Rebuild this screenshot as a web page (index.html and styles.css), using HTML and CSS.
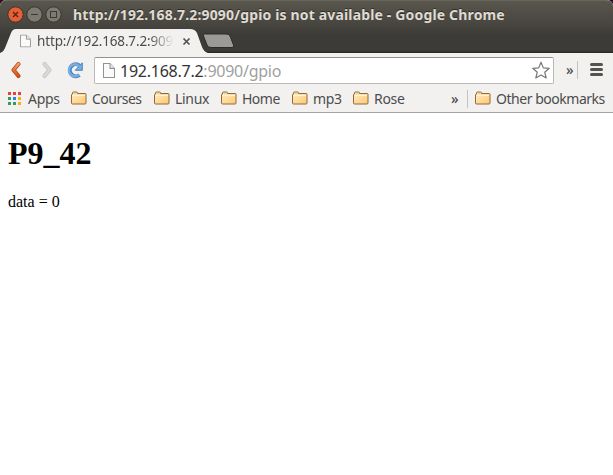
FILE: index.html
```
<!DOCTYPE html>
<html lang="en">
<head>
<meta charset="utf-8">
<title>http://192.168.7.2:9090/gpio is not available</title>
<link rel="stylesheet" href="styles.css">
</head>
<body>
<svg class="defs" width="0" height="0" aria-hidden="true">
  <defs>
    <linearGradient id="paper" x1="0" y1="0" x2="1" y2="1"><stop offset="0" stop-color="#ffeec4"/><stop offset="1" stop-color="#fcc874"/></linearGradient>
    <linearGradient id="orange" x1="0" y1="0" x2="0" y2="1"><stop offset="0" stop-color="#f0a06a"/><stop offset="1" stop-color="#dc4a10"/></linearGradient>
    <symbol id="folder" viewBox="0 0 16 14">
      <path d="M1.5 3V1.9Q1.5 1 2.4 1H5.6Q6.5 1 6.5 1.9V2.5H14.2Q15 2.5 15 3.3V12Q15 13 14 13H1.5Q.5 13 .5 12V4Q.5 3 1.5 3Z" fill="url(#paper)" stroke="#94683a"/>
      <path d="M1.5 4.5H14" stroke="#fff3d5" fill="none"/><path d="M2.5 2.5H5.5" stroke="#efcf95"/>
    </symbol>
    <symbol id="page" viewBox="0 0 12 14">
      <path d="M.5.5H7L11.5 5V13.5H.5Z" fill="#fafafa" stroke="#929292"/><path d="M7 .5V5H11.5" fill="#e8e8e8" stroke="#929292"/>
    </symbol>
  </defs>
</svg>
<div class="window">
  <header class="titlebar">
    <svg class="controls" width="56" height="19" viewBox="0 0 56 19">
      <circle cx="8.500" cy="9.500" r="7.700" fill="#e95f35" stroke="#36342f"/>
      <path d="M6 7L11 12M11 7L6 12" stroke="#522517" stroke-width="1.400"/>
      <circle cx="27.500" cy="9.500" r="7.700" fill="#7c7a71" stroke="#36342f"/>
      <path d="M24 9.500H31" stroke="#3a3934"/>
      <circle cx="46.500" cy="9.500" r="7.700" fill="#7c7a71" stroke="#36342f"/>
      <rect x="43.500" y="6.500" width="6" height="6" fill="none" stroke="#3a3934"/>
    </svg>
    <h2 class="title">http://192.168.7.2:9090/gpio is not available - Google Chrome</h2>
  </header>
  <div class="tabstrip">
    <svg class="tab-shapes" width="240" height="25" viewBox="0 0 240 25">
      <path d="M0 25C3 24 4 22 5 20L11 5Q12.500 1 16 1H190Q195 1 197 5L202 19Q204 24 208 25Z" fill="#f2f1f0"/>
      <path d="M204 6H226Q229 6 230 8L233.500 17Q234.500 19.500 232 19.500H211Q208 19.500 207 17L203.500 8Q203 6 204 6Z" fill="#9b9a98" stroke="#2d2c28"/>
    </svg>
    <div class="tab">
      <svg width="11" height="14" viewBox="0 0 12 14"><use href="#page"/></svg>
      <span class="tab-title">http://192.168.7.2:9090/gpio</span>
      <svg width="9" height="9" viewBox="0 0 9 9"><path d="M1.500 1.500L7.500 7.500M7.500 1.500L1.500 7.500" stroke="#55524e" stroke-width="1.700"/></svg>
    </div>
  </div>
  <nav class="toolbar">
    <svg class="nav" width="80" height="23" viewBox="0 0 80 23">
      <g fill="none" stroke-linecap="round" stroke-linejoin="round">
        <path d="M14.500 6L9.500 12L14.500 18" stroke="#b24d1d" stroke-width="4.200"/>
        <path d="M14.500 6L9.500 12L14.500 18" stroke="url(#orange)" stroke-width="2.600"/>
        <path d="M40.500 6L45.500 12L40.500 18" stroke="#c5c4c3" stroke-width="4.200"/>
        <path d="M40.500 6L45.500 12L40.500 18" stroke="#dad9d8" stroke-width="2.600"/>
      </g>
      <path d="M75.500 7.500A6 6 0 1 0 75.500 17" fill="none" stroke="#4e84bd" stroke-width="4"/>
      <path d="M78.300 4.800V12.300H71.300Z" fill="#78aede" stroke="#4e84bd" stroke-linejoin="round"/>
      <path d="M75.300 8.200A6 6 0 1 0 75.100 16.600" fill="none" stroke="#78aede" stroke-width="2.400"/>
    </svg>
    <div class="omnibox">
      <svg width="12" height="15" viewBox="0 0 12 14" preserveAspectRatio="none"><use href="#page"/></svg>
      <span class="url">192.168.7.2<span class="path">:9090/gpio</span></span>
      <svg class="star" width="20" height="19" viewBox="0 0 20 19"><path d="M10 1.200L12.300 6.900L18.300 7.300L13.700 11.200L15.200 17L10 13.900L4.800 17L6.300 11.200L1.700 7.300L7.700 6.900Z" fill="#fff" stroke="#777" stroke-width="1.200" stroke-linejoin="round"/></svg>
    </div>
    <span class="more">»</span>
    <i class="rule"></i>
    <svg class="menu" width="13" height="13" viewBox="0 0 13 13"><path d="M1.500 1.500H11.500M1.500 6.500H11.500M1.500 11.500H11.500" stroke="#55534f" stroke-width="3" stroke-linecap="round"/></svg>
  </nav>
  <nav class="bookmarks">
    <a class="mark apps"><svg width="13" height="13" viewBox="0 0 13 13"><path d="M0 0h3v3H0zM5 0h3v3H5zM10 0h3v3h-3z" fill="#e8403a"/><path d="M0 5h3v3H0zM0 10h3v3H0zM5 10h3v3H5z" fill="#329b5b"/><path d="M5 5h3v3H5z" fill="#2684ee"/><path d="M10 5h3v3h-3zM10 10h3v3h-3z" fill="#f6b40a"/></svg><span>Apps</span></a>
    <a class="mark courses"><svg width="16" height="14"><use href="#folder"/></svg><span>Courses</span></a>
    <a class="mark linux"><svg width="16" height="14"><use href="#folder"/></svg><span>Linux</span></a>
    <a class="mark home"><svg width="16" height="14"><use href="#folder"/></svg><span>Home</span></a>
    <a class="mark mp3"><svg width="16" height="14"><use href="#folder"/></svg><span>mp3</span></a>
    <a class="mark rose"><svg width="16" height="14"><use href="#folder"/></svg><span>Rose</span></a>
    <span class="more">»</span>
    <i class="rule"></i>
    <a class="mark other"><svg width="16" height="14"><use href="#folder"/></svg><span>Other bookmarks</span></a>
  </nav>
  <main class="page">
    <h1>P9_42</h1>
    <p>data = 0</p>
  </main>
</div>
</body>
</html>
```
FILE: styles.css
```
* { box-sizing: border-box; }
body { margin: 0; background: #2f0c24; font-family: "Noto Sans", sans-serif; }
.defs { position: absolute; }
svg { display: block; flex: none; }
.window { width: 613px; height: 475px; display: flex; flex-direction: column; overflow: hidden; border-radius: 6px 6px 0 0; background: #fff; white-space: nowrap; }
.titlebar { height: 28px; flex: none; display: flex; align-items: center; padding: 0 0 0 7px; border-top: 1px solid #69665c; background: linear-gradient(#59564d, #45433d); }
.title { margin: 1px 0 0 10px; font-size: 14px; line-height: 20px; font-weight: 700; color: #dfdbd2; letter-spacing: .16px; text-shadow: 0 -1px #2c2b27; }
.tabstrip { height: 25px; flex: none; position: relative; background: linear-gradient(#42413b, #3c3b37 30%, #3c3b37 90%, #292824); }
.tab-shapes { position: absolute; left: 0; top: 0; }
.tab { position: relative; display: flex; align-items: center; height: 25px; padding: 1px 0 0 20px; }
.tab-title { width: 137px; margin: 0 8px 0 6px; overflow: hidden; font-size: 13.5px; line-height: 20px; color: #4c4c4c; letter-spacing: -.15px; -webkit-mask-image: linear-gradient(90deg, #000 82%, transparent); mask-image: linear-gradient(90deg, #000 82%, transparent); }
.toolbar { height: 33px; flex: none; display: flex; align-items: center; background: #f2f1f0; }
.nav { margin-left: 4px; }
.omnibox { width: 460px; height: 27px; margin: 2px 0 0 10px; padding: 0 2px 0 8px; display: flex; align-items: center; border: 1px solid #b9b8b6; border-top-color: #929190; border-radius: 2px; background: #fff; }
.url { margin-left: 5px; font-size: 16px; line-height: 22px; color: #333; letter-spacing: -.25px; }
.path { color: #a0a0a0; }
.star { margin-left: auto; }
.more { font-size: 14px; line-height: 18px; font-weight: 500; color: #4c4c4c; }
.toolbar .more { margin-left: 12px; width: 11px; }
.rule { width: 1px; height: 18px; background: #c4c3c1; }
.menu { margin-left: 12px; }
.bookmarks { height: 27px; flex: none; display: flex; align-items: center; background: #f2f1f0; border-bottom: 1px solid #a5a4a2; padding-left: 8px; font-size: 14px; line-height: 20px; color: #4c4c4c; }
.mark { display: flex; align-items: center; gap: 5px; flex: none; }
.mark svg { margin-top: -2px; }
.apps { width: 63px; gap: 7px; letter-spacing: -.3px; }
.courses { width: 83px; letter-spacing: -.5px; }
.linux { width: 67px; letter-spacing: -.3px; }
.home { width: 71px; letter-spacing: -.5px; }
.mp3 { width: 61px; letter-spacing: -.4px; }
.rose { width: 98px; letter-spacing: -.3px; }
.bookmarks .more { width: 16px; }
.other { margin-left: 7px; letter-spacing: -.47px; }
.page { flex: 1; padding: 0 8px; font-family: "Liberation Serif", serif; font-size: 16px; color: #000; }
.page h1 { margin: 21px 0; padding-top: 1px; font-size: 32px; line-height: 37px; }
.page p { margin: 0; line-height: 18px; }
```
